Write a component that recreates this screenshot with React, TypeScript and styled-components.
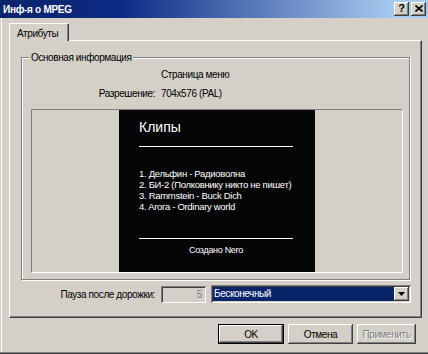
import React from "react";
import styled, { createGlobalStyle } from "styled-components";

// Win2k palette.
const FACE = "#d4d0c8";
const SHADOW = "#808080";
const DARK = "#404040";
const NAVY = "#0a246a";

const GlobalStyle = createGlobalStyle`
  html, body {
    margin: 0;
    padding: 0;
    background: ${FACE};
  }
  body {
    font-family: "Liberation Sans", Arial, sans-serif;
    font-size: 10px;
    letter-spacing: -0.4px;
    color: #000;
  }
`;

const Window = styled.div`
  width: 428px;
  height: 354px;
  display: flex;
  flex-direction: column;
  background: ${FACE};
  overflow: hidden;
`;

const TitleBar = styled.div`
  flex: none;
  height: 18px;
  display: flex;
  align-items: center;
  padding: 0 2px 0 3px;
  background: linear-gradient(to right, ${NAVY} 0%, #0c2a84 28%, #a6caf0 92%);
`;

const TitleText = styled.div`
  flex: 1;
  color: #fff;
  font-weight: bold;
  font-size: 10px;
  letter-spacing: -0.3px;
`;

const CaptionButtons = styled.div`
  display: flex;
  gap: 2px;
`;

const CaptionButton = styled.div`
  width: 15px;
  height: 14px;
  box-sizing: border-box;
  display: flex;
  align-items: center;
  justify-content: center;
  background: ${FACE};
  box-shadow: inset -1px -1px ${DARK}, inset 1px 1px #fff, inset -2px -2px ${SHADOW};
  font-weight: bold;
  font-size: 11px;
  letter-spacing: 0;
  line-height: 1;
  padding-bottom: 1px;
`;

const Client = styled.div`
  flex: 1;
  display: flex;
  flex-direction: column;
  padding: 5px 0 0 9px;
  box-shadow: inset 0 -1px ${DARK}, inset 0 -2px ${SHADOW}, inset 1px 0 ${FACE}, inset 2px 0 #fff;
`;

const TabStrip = styled.div`
  display: flex;
  height: 17px;
`;

const Tab = styled.div`
  position: relative;
  z-index: 1;
  width: 60px;
  height: 18px;
  box-sizing: border-box;
  padding: 4px 0 0 7px;
  background: ${FACE};
  border-left: 1px solid #fff;
  border-top: 1px solid #fff;
  border-right: 1px solid ${DARK};
  border-top-right-radius: 2px;
  box-shadow: inset -1px 0 ${SHADOW};
`;

const TabPanel = styled.div`
  width: 413px;
  height: 278px;
  box-sizing: border-box;
  padding: 16px 0 0 11px;
  border-left: 1px solid #fff;
  border-top: 1px solid #fff;
  border-right: 1px solid ${DARK};
  border-bottom: 1px solid ${DARK};
  box-shadow: inset -1px -1px ${SHADOW};
`;

const GroupBox = styled.div`
  position: relative;
  width: 389px;
  height: 223px;
  box-sizing: border-box;
  padding-top: 10px;
  border: 1px solid ${SHADOW};
  box-shadow: inset 1px 1px #fff, 1px 1px #fff;
`;

const Legend = styled.div`
  position: absolute;
  top: -7px;
  left: 7px;
  padding: 0 2px;
  background: ${FACE};
  line-height: 13px;
`;

const InfoGrid = styled.div`
  display: grid;
  grid-template-columns: 133px 1fr;
  column-gap: 6px;
  row-gap: 6px;
  line-height: 13px;
`;

const InfoLabel = styled.div`
  text-align: right;
`;

const Preview = styled.div`
  height: 164px;
  margin: 9px 6px 0 9px;
  box-sizing: border-box;
  display: flex;
  justify-content: center;
  border-top: 1px solid ${SHADOW};
  border-left: 1px solid ${SHADOW};
  border-bottom: 1px solid #fff;
  border-right: 1px solid #fff;
`;

const Screen = styled.div`
  width: 196px;
  box-sizing: border-box;
  padding: 9px 22px 16px 20px;
  display: flex;
  flex-direction: column;
  background: #050505;
  color: #fff;
  letter-spacing: -0.3px;
`;

const ScreenTitle = styled.div`
  font-size: 14px;
  line-height: 16px;
  letter-spacing: 0;
`;

const ScreenRule = styled.div<{ $bottom?: boolean }>`
  height: 1px;
  background: #fff;
  margin-top: ${(p) => (p.$bottom ? "auto" : "11px")};
`;

const TrackList = styled.div`
  margin-top: 21px;
  font-size: 9.5px;
  line-height: 11px;
  letter-spacing: -0.3px;
  white-space: nowrap;
`;

const Credit = styled.div`
  margin-top: 6px;
  text-align: center;
  font-size: 9px;
  line-height: 11px;
`;

const PauseRow = styled.div`
  display: flex;
  align-items: center;
  margin-top: 5px;
  height: 18px;
`;

const PauseLabel = styled.div`
  width: 134px;
  text-align: right;
  margin-right: 6px;
`;

const sunken = `
  box-shadow: inset 1px 1px ${SHADOW}, inset -1px -1px #fff, inset 2px 2px ${DARK}, inset -2px -2px ${FACE};
`;

const NumberField = styled.div`
  width: 45px;
  height: 17px;
  box-sizing: border-box;
  padding: 2px 4px 0 0;
  text-align: right;
  color: ${SHADOW};
  background: ${FACE};
  line-height: 13px;
  ${sunken}
`;

const Combo = styled.div`
  width: 200px;
  height: 18px;
  margin-left: 5px;
  box-sizing: border-box;
  padding: 2px;
  display: flex;
  background: #fff;
  ${sunken}
`;

const ComboValue = styled.div`
  flex: 1;
  padding-left: 1px;
  background: ${NAVY};
  color: #fff;
  line-height: 14px;
`;

const ComboArrow = styled.div`
  width: 15px;
  display: flex;
  align-items: center;
  justify-content: center;
  background: ${FACE};
  box-shadow: inset -1px -1px ${DARK}, inset 1px 1px #fff, inset -2px -2px ${SHADOW};
`;

const ButtonRow = styled.div`
  display: flex;
  justify-content: flex-end;
  gap: 4px;
  margin-top: 6px;
  padding-right: 12px;
`;

const Button = styled.div<{ $width: number; $default?: boolean; $disabled?: boolean }>`
  width: ${(p) => p.$width}px;
  height: 20px;
  box-sizing: border-box;
  display: flex;
  align-items: center;
  justify-content: center;
  background: ${FACE};
  border: ${(p) => (p.$default ? "1px solid #000" : "none")};
  box-shadow: inset -1px -1px ${DARK}, inset 1px 1px #fff, inset -2px -2px ${SHADOW};
  color: ${(p) => (p.$disabled ? SHADOW : "#000")};
  text-shadow: ${(p) => (p.$disabled ? "1px 1px #fff" : "none")};
`;

const tracks = [
  "1. Дельфин - Радиоволна",
  "2. БИ-2 (Полковнику никто не пишет)",
  "3. Rammstein - Buck Dich",
  "4. Arora - Ordinary world",
];

const App: React.FC = () => {
  return (
    <Window>
      <GlobalStyle />
      <TitleBar>
        <TitleText>Инф-я о MPEG</TitleText>
        <CaptionButtons>
          <CaptionButton>?</CaptionButton>
          <CaptionButton>
            <svg width="8" height="7" viewBox="0 0 8 7">
              <path d="M0.5 0.5 L7.5 6.5 M7.5 0.5 L0.5 6.5" stroke="#000" strokeWidth="1.6" />
            </svg>
          </CaptionButton>
        </CaptionButtons>
      </TitleBar>

      <Client>
        <TabStrip>
          <Tab>Атрибуты</Tab>
        </TabStrip>
        <TabPanel>
          <GroupBox>
            <Legend>Основная информация</Legend>
            <InfoGrid>
              <InfoLabel />
              <div>Страница меню</div>
              <InfoLabel>Разрешение:</InfoLabel>
              <div>704x576 (PAL)</div>
            </InfoGrid>
            <Preview>
              <Screen>
                <ScreenTitle>Клипы</ScreenTitle>
                <ScreenRule />
                <TrackList>
                  {tracks.map((t) => (
                    <div key={t}>{t}</div>
                  ))}
                </TrackList>
                <ScreenRule $bottom />
                <Credit>Создано Nero</Credit>
              </Screen>
            </Preview>
          </GroupBox>
          <PauseRow>
            <PauseLabel>Пауза после дорожки:</PauseLabel>
            <NumberField>5</NumberField>
            <Combo>
              <ComboValue>Бесконечный</ComboValue>
              <ComboArrow>
                <svg width="7" height="4" viewBox="0 0 7 4">
                  <path d="M0 0 H7 L3.5 4 Z" fill="#000" />
                </svg>
              </ComboArrow>
            </Combo>
          </PauseRow>
        </TabPanel>
        <ButtonRow>
          <Button $width={66} $default>
            OK
          </Button>
          <Button $width={65}>Отмена</Button>
          <Button $width={59} $disabled>
            Применить
          </Button>
        </ButtonRow>
      </Client>
    </Window>
  );
};

export default App;
